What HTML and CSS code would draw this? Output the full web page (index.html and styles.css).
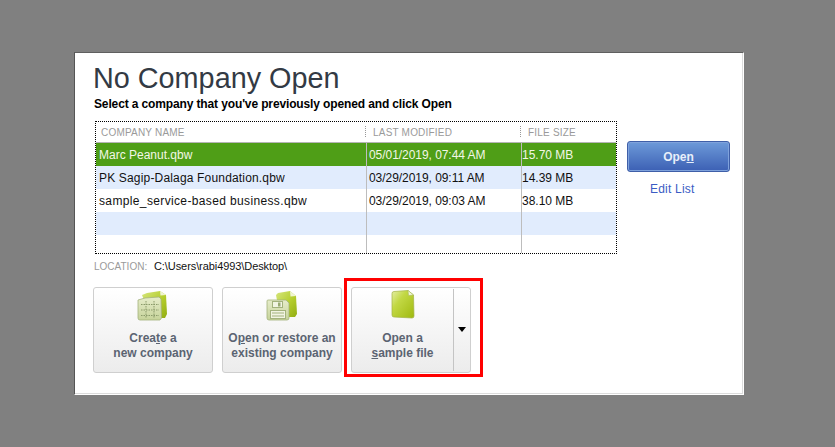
FILE: index.html
```html
<!DOCTYPE html>
<html lang="en">
<head>
<meta charset="utf-8">
<title>No Company Open</title>
<link rel="stylesheet" href="styles.css">
</head>
<body>
<main class="dialog">
  <h1 class="title">No Company Open</h1>
  <p class="subtitle">Select a company that you've previously opened and click Open</p>
  <div class="top">
    <div class="list">
      <div class="head">
        <div class="hcell">COMPANY NAME</div>
        <div class="hcell grip">LAST MODIFIED</div>
        <div class="hcell grip">FILE SIZE</div>
      </div>
      <div class="row selected"><div class="cell">Marc Peanut.qbw</div><div class="cell">05/01/2019, 07:44 AM</div><div class="cell">15.70 MB</div></div>
      <div class="row alt"><div class="cell name-mid">PK Sagip-Dalaga Foundation.qbw</div><div class="cell">03/29/2019, 09:11 AM</div><div class="cell">14.39 MB</div></div>
      <div class="row"><div class="cell name-wide">sample_service-based business.qbw</div><div class="cell">03/29/2019, 09:03 AM</div><div class="cell">38.10 MB</div></div>
      <div class="row alt"><div class="cell"></div><div class="cell"></div><div class="cell"></div></div>
      <div class="row last"><div class="cell"></div><div class="cell"></div><div class="cell"></div></div>
    </div>
    <div class="side">
      <button class="open">Ope<u>n</u></button>
      <a class="edit">Edit List</a>
    </div>
  </div>
  <div class="location"><span class="loc-label">LOCATION:</span><span class="loc-path">C:\Users\rabi4993\Desktop\</span></div>
  <div class="actions">
    <button class="action">
      <svg class="icon" width="32" height="30" viewBox="0 0 32 30">
        <defs>
          <linearGradient id="doc" x1="0" y1="0" x2="1" y2="1"><stop offset="0" stop-color="#d6e67e"/><stop offset=".55" stop-color="#b4cd2c"/><stop offset="1" stop-color="#92ad12"/></linearGradient>
          <linearGradient id="pane" x1="0" y1="0" x2="0" y2="1"><stop offset="0" stop-color="#e6ecca"/><stop offset="1" stop-color="#c6d39a"/></linearGradient>
        </defs>
        <path d="M5 4 L10 2 L23 0 L29 4 L30 23 L28 27 L14 27Z" fill="url(#doc)"/>
        <path d="M23 0 L23.5 4.5 L29 4Z" fill="#f0f5d2"/>
        <path d="M1 9 L8 7 L22 6 L24 8 L24.5 27 L23 29 L3 29 Q1 29 1 27Z" fill="url(#pane)" stroke="#a3b27c" stroke-width=".8"/>
        <path d="M4 13.5H22M4 19H22M4 24.5H22M9 10V27M17 10V27" stroke="#8b9b6a" stroke-dasharray="1.5 1" fill="none"/>
      </svg>
      <span class="label">Crea<u>t</u>e a<br>new company</span>
    </button>
    <button class="action">
      <svg class="icon" width="32" height="30" viewBox="0 0 32 30">
        <path d="M10 4 L12 2 L24 0 L30 5 L31 23 L29 26 L14 26Z" fill="url(#doc)"/>
        <path d="M24 0 L24.5 5.5 L30 5Z" fill="#f0f5d2"/>
        <path d="M2 9 H20 L23 12 V27 Q23 29 21 29 H3 Q1 29 1 27 V10 Q1 9 2 9Z" fill="url(#pane)" stroke="#a3b27c" stroke-width=".8"/>
        <rect x="6.500" y="10.500" width="10" height="6" fill="#f1f4e2" stroke="#a3b27c"/>
        <rect x="12" y="11.500" width="2.500" height="4" fill="#9aaa72"/>
        <rect x="4.500" y="19.500" width="15" height="8" fill="#f1f4e2" stroke="#a3b27c"/>
        <path d="M6 22H18M6 25H18" stroke="#a3b27c" fill="none"/>
      </svg>
      <span class="label">O<u>p</u>en or restore an<br>existing company</span>
    </button>
    <div class="split-frame">
      <div class="split">
        <button class="split-main">
          <svg class="icon" width="24" height="29" viewBox="0 0 24 29">
            <defs><linearGradient id="leaf" x1="0" y1="0" x2="1" y2="1"><stop offset="0" stop-color="#e4eea6"/><stop offset=".35" stop-color="#c2d844"/><stop offset="1" stop-color="#9fb90f"/></linearGradient></defs>
            <path d="M3 1.500 L17 0.500 L22.500 5 L23 26 Q23 28 21 28 L3 27 Q1 27 1 25 L1 3.500 Q1 1.500 3 1.500Z" fill="url(#leaf)" stroke="#a2b243" stroke-width=".7"/>
            <path d="M17 0.500 L17.500 5.500 L22.500 5Z" fill="#f3f7dc" stroke="#aabb5b" stroke-width=".6"/>
          </svg>
          <span class="label">Open a<br><u>s</u>ample file</span>
        </button>
        <div class="split-arrow"><span class="caret"></span></div>
      </div>
    </div>
  </div>
</main>
</body>
</html>
```
FILE: styles.css
```css
* { box-sizing: border-box; }
html, body { margin: 0; height: 100%; }
body {
  background: #808080;
  padding: 52px 0 0 74px;
  font-family: "Liberation Sans", Arial, sans-serif;
  overflow: hidden;
}
.dialog {
  width: 670px;
  height: 343px;
  background: #fff;
  border-style: solid;
  border-width: 1px 1px 1px 1px;
  border-color: #5f5f5f #fff #fff #555;
  box-shadow: inset -1px -1px 0 #dcdcdc;
  padding: 8px 0 0 18px;
  display: flex;
  flex-direction: column;
}
.title {
  margin: 0;
  font-size: 28.8px;
  line-height: 34px;
  font-weight: 400;
  color: #333a44;
}
.subtitle {
  margin: 2px 0 0 1px;
  font-size: 12px;
  line-height: 15px;
  font-weight: 700;
  letter-spacing: -.13px;
  color: #000;
}
.top {
  display: flex;
  margin: 9px 0 0 2px;
}
.list {
  width: 522px;
  height: 133px;
  border: 1px dotted #000;
  display: flex;
  flex-direction: column;
  overflow: hidden;
}
.head, .row {
  display: grid;
  grid-template-columns: 270px 155px 1fr;
}
.head {
  border-bottom: 1px solid #b5b5b5;
  flex: none;
  height: 21px;
}
.hcell {
  font-size: 10px;
  line-height: 21px;
  color: #9a9a9a;
  padding-left: 5px;
  letter-spacing: .2px;
}
.grip {
  padding-left: 7px;
  position: relative;
}
.grip::before {
  content: "";
  position: absolute;
  left: -1px;
  top: 4px;
  height: 11px;
  border-left: 1px dotted #999;
}
.row {
  height: 23px;
  flex: none;
  font-size: 12px;
  line-height: 24px;
  color: #111;
}
.row.last { flex: 1; }
.row.alt { background: #e1ecfd; }
.row.selected { background: #4f9e17; color: #f3f7e6; }
.cell {
  padding-left: 3px;
  white-space: nowrap;
  overflow: hidden;
}
.name-mid { letter-spacing: .17px; }
.name-wide { letter-spacing: .36px; }
.cell:nth-child(2), .cell:nth-child(3) { border-left: 1px solid #bdbdbd; }
.cell:nth-child(2) { padding-left: 2px; letter-spacing: -.05px; }
.cell:nth-child(3) { padding-left: 0; }
.side {
  margin: 20px 0 0 10px;
  display: flex;
  flex-direction: column;
  align-items: flex-start;
}
.open {
  width: 103px;
  height: 31px;
  border: 1px solid #3f5fa8;
  border-radius: 3px;
  background: linear-gradient(#6d9ad9, #3c60b4);
  color: #e8effa;
  font: 700 12px "Liberation Sans", Arial, sans-serif;
  padding: 0;
  box-shadow: inset 0 0 0 1px #7fa2dc;
}
.edit {
  margin: 10px 0 0 23px;
  font-size: 12px;
  line-height: 15px;
  letter-spacing: .2px;
  color: #3b5cc4;
}
.location {
  display: flex;
  align-items: baseline;
  margin: 5px 0 0 1px;
  height: 15px;
  line-height: 15px;
}
.loc-label {
  font-size: 10px;
  color: #9a9a9a;
  width: 60px;
}
.loc-path {
  font-size: 11px;
  letter-spacing: -.08px;
  color: #111;
}
.actions {
  display: flex;
  margin: 13px 0 0 0;
  gap: 9px;
}
.action, .split-main {
  display: flex;
  flex-direction: column;
  align-items: center;
  font: 700 12px/15px "Liberation Sans", Arial, sans-serif;
  color: #5b6472;
  background: none;
  border: 0;
  padding: 0;
}
.action {
  width: 120px;
  height: 86px;
  border: 1px solid #cfcfcf;
  border-radius: 3px;
  background: linear-gradient(#fff, #ececec);
}
.icon { margin-top: 3px; flex: none; }
.label { margin-top: 10px; text-align: center; }
.split-frame {
  margin: -9px 0 0 -7px;
  width: 139px;
  height: 99px;
  border: 3px solid #f00;
  padding: 6px 0 0 4px;
}
.split {
  width: 120px;
  height: 86px;
  display: flex;
  border: 1px solid #cfcfcf;
  border-radius: 3px;
  background: linear-gradient(#fff, #ececec);
}
.split-main { width: 101px; height: 84px; }
.split-main .icon { margin-top: 2px; }
.split-main .label { margin-top: 12px; }
.split-arrow {
  flex: 1;
  border-left: 1px solid #c4c4c4;
  margin: 1px 0;
  display: flex;
  align-items: center;
  justify-content: center;
  padding-bottom: 2px;
}
.caret {
  width: 0;
  height: 0;
  border-left: 4px solid transparent;
  border-right: 4px solid transparent;
  border-top: 5px solid #000;
}
```
